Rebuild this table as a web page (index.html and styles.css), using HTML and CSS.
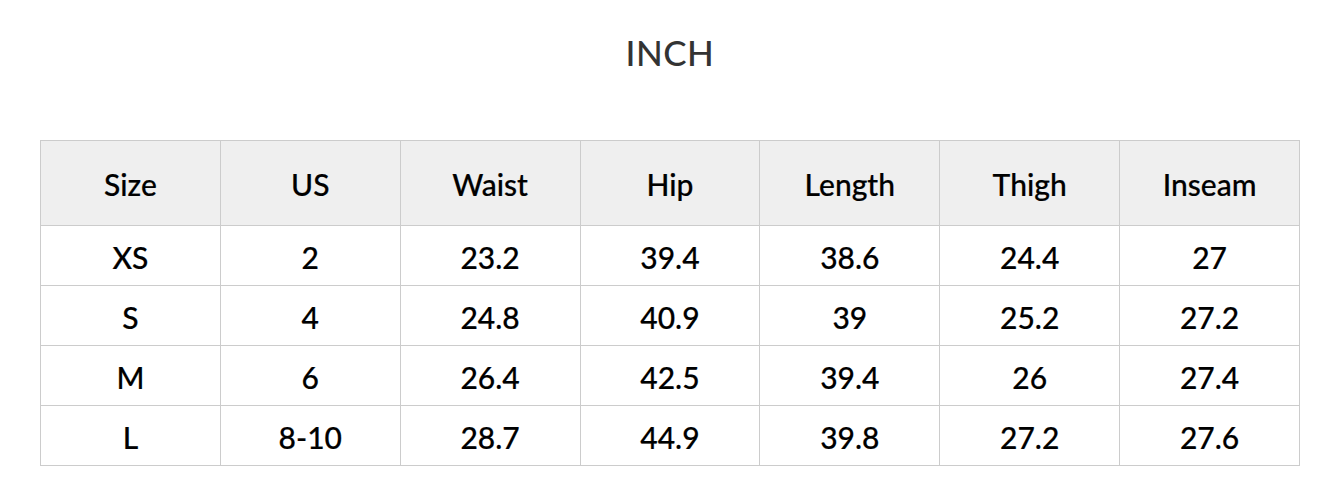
FILE: index.html
```html
<!DOCTYPE html>
<html>
<head>
<meta charset="utf-8">
<link rel="stylesheet" href="styles.css">
</head>
<body>
<div class="page">
  <h1 class="title">INCH</h1>
  <table class="chart">
    <thead>
      <tr><th>Size</th><th>US</th><th>Waist</th><th>Hip</th><th>Length</th><th>Thigh</th><th>Inseam</th></tr>
    </thead>
    <tbody>
      <tr><td>XS</td><td>2</td><td>23.2</td><td>39.4</td><td>38.6</td><td>24.4</td><td>27</td></tr>
      <tr><td>S</td><td>4</td><td>24.8</td><td>40.9</td><td>39</td><td>25.2</td><td>27.2</td></tr>
      <tr><td>M</td><td>6</td><td>26.4</td><td>42.5</td><td>39.4</td><td>26</td><td>27.4</td></tr>
      <tr><td>L</td><td>8-10</td><td>28.7</td><td>44.9</td><td>39.8</td><td>27.2</td><td>27.6</td></tr>
    </tbody>
  </table>
</div>
</body>
</html>
```
FILE: styles.css
```css
html, body {
  margin: 0;
  padding: 0;
  background: #fff;
}
.page {
  padding: 0 40px;
  font-family: "Lato", "Noto Sans", sans-serif;
  color: #000;
}
.title {
  margin: 0;
  padding-top: 30px;
  height: 140px;
  box-sizing: border-box;
  text-align: center;
  font-size: 35px;
  font-weight: 500;
  color: #333;
  line-height: 44px;
  letter-spacing: 0.5px;
}
.chart {
  width: 1260px;
  border-collapse: collapse;
  table-layout: fixed;
}
.chart th, .chart td {
  border: 1px solid #cccccc;
  text-align: center;
  vertical-align: middle;
  font-size: 30px;
  font-weight: 500;
  padding: 2px 0 0 0;
  -webkit-text-stroke: 0.2px #000;
}
.chart th {
  height: 82px;
  background: #efefef;
}
.chart td {
  height: 57px;
}
```
